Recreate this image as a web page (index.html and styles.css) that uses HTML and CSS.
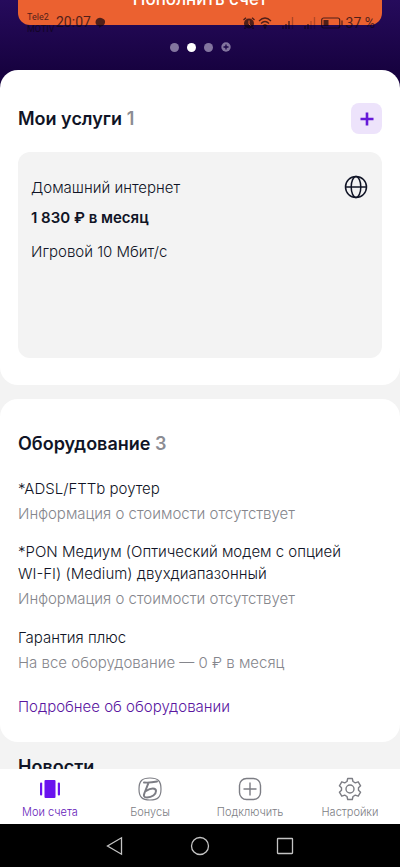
FILE: index.html
```
<!DOCTYPE html>
<html lang="ru">
<head>
<meta charset="utf-8">
<meta name="viewport" content="width=device-width, initial-scale=1">
<title>Мои счета</title>
<link rel="stylesheet" href="styles.css">
</head>
<body>
<div class="status">
  <div class="carrier"><span>Tele2</span><span>MOTIV</span></div>
  <span class="time">20:07</span>
  <svg class="bubble" width="12" height="12" viewBox="0 0 12 12"><path d="M3.500 1.500Q6 0 8.500 1.500Q11.500 2.500 11 5.500Q10.500 8.500 7 9.500L5.500 11L5 9Q1.500 8.500 1.500 5Q1.500 2.500 3.500 1.500Z" fill="currentColor"/></svg>
  <div class="signals">
    <svg width="12" height="12" viewBox="0 0 12 12"><circle cx="6" cy="6.500" r="5" fill="currentColor"/><path d="M.5 3L3 .8M11.500 3L9 .8M2.500 10.500L1.500 12M9.500 10.500L10.500 12" stroke="currentColor" stroke-width="1.500"/><path d="M6 3.500V7L7.500 8.500" fill="none" stroke="#eb6130"/></svg>
    <svg width="14" height="12" viewBox="0 0 14 12" fill="none" stroke="currentColor" stroke-width="1.200"><path d="M1 4Q7-2 13 4M3 6.500Q7 2.500 11 6.500M5 9Q7 7 9 9"/><circle cx="7" cy="10.500" r=".6" fill="currentColor"/></svg>
    <svg class="cell" width="12" height="12" viewBox="0 0 12 12" stroke="currentColor" stroke-width="1.300"><path d="M1 9V12M4 7V12M7 4V12"/><path d="M10.500 0V12" opacity=".4"/></svg>
    <svg class="cell" width="12" height="12" viewBox="0 0 12 12" stroke="currentColor" stroke-width="1.300"><path d="M1 9V12M4 7V12"/><path d="M7 4V12M10.500 0V12" opacity=".35"/></svg>
    <svg class="battery" width="22" height="12" viewBox="0 0 22 12"><rect x=".7" y="1" width="18" height="10" rx="2" fill="none" stroke="currentColor" stroke-width="1.200"/><rect x="2.500" y="3" width="5" height="6" fill="currentColor"/><path d="M21 3.500V8.500" stroke="currentColor" stroke-width="1.200"/></svg>
    <span class="charge">37 %</span>
  </div>
</div>
<main>
  <header class="hero">
    <div class="pay-clip"><button class="pay">Пополнить счет</button></div>
    <div class="dots">
      <i></i><i class="on"></i><i></i>
      <svg width="10" height="10" viewBox="0 0 10 10"><circle cx="5" cy="5" r="4.700" fill="#83759f"/><path d="M5 2.500V7.500M2.500 5H7.500" stroke="#1c0648" stroke-width="1.300"/></svg>
    </div>
  </header>
  <section class="card services">
    <div class="head">
      <h2>Мои услуги <span>1</span></h2>
      <button class="add" aria-label="Добавить услугу"><svg width="14" height="14" viewBox="0 0 14 14"><path d="M7 .5V13.500M.5 7H13.500" stroke="#6519d8" stroke-width="2.600"/></svg></button>
    </div>
    <article class="service">
      <div class="row">
        <p>Домашний интернет</p>
        <svg width="24" height="24" viewBox="0 0 24 24" fill="none" stroke="#101426" stroke-width="1.500"><circle cx="12" cy="12" r="10.500"/><ellipse cx="12" cy="12" rx="4.800" ry="10.500"/><path d="M1.500 12H22.500"/></svg>
      </div>
      <p class="price">1 830 ₽ в месяц</p>
      <p class="plan">Игровой 10 Мбит/с</p>
    </article>
  </section>
  <section class="card equipment">
    <h2>Оборудование <span>3</span></h2>
    <dl>
      <div><dt>*ADSL/FTTb роутер</dt><dd>Информация о стоимости отсутствует</dd></div>
      <div><dt>*PON Медиум (Оптический модем с опцией <span class="keep">WI-FI)</span> (Medium) двухдиапазонный</dt><dd>Информация о стоимости отсутствует</dd></div>
      <div><dt>Гарантия плюс</dt><dd>На все оборудование — 0 ₽ в месяц</dd></div>
    </dl>
    <a class="more" href="#equipment">Подробнее об оборудовании</a>
  </section>
  <section class="news"><h2>Новости</h2></section>
</main>
<footer>
  <nav class="tabs">
    <a class="active" href="#accounts">
      <svg width="24" height="24" viewBox="0 0 24 24" fill="#6a13ee"><rect x="6.500" y="3" width="11" height="18" rx="1"/><rect x="2" y="5.500" width="2.200" height="13" rx="1"/><rect x="19.800" y="5.500" width="2.200" height="13" rx="1"/></svg>
      <span>Мои счета</span></a>
    <a href="#bonus">
      <svg width="24" height="24" viewBox="0 0 24 24" fill="none" stroke="currentColor"><path d="M12 1C20 1 23 4 23 12S20 23 12 23S1 20 1 12S4 1 12 1Z" stroke-width="1.200"/><path d="M19 4.500Q12 6 6 5.500M10.500 5.800L6.500 16M6.500 16Q4.500 20.500 9 20.500C14 20.500 18 17.500 18 14C18 10.500 13 10.500 8 14" stroke-width="2" stroke-linecap="round"/></svg>
      <span>Бонусы</span></a>
    <a href="#connect">
      <svg width="24" height="24" viewBox="0 0 24 24" fill="none" stroke="currentColor" stroke-width="1.400"><rect x="1.500" y="1.500" width="21" height="21" rx="7"/><path d="M12 5.500V18.500M5.500 12H18.500"/></svg>
      <span>Подключить</span></a>
    <a href="#settings">
      <svg width="24" height="24" viewBox="0 0 24 24" fill="none" stroke="currentColor" stroke-width="1.400" stroke-linejoin="round"><path d="M9.700 1.500H14.300L15 4.500L17.300 5.800L20.200 4.800L22.600 8.800L20.500 10.800V13.200L22.600 15.200L20.200 19.200L17.300 18.200L15 19.500L14.300 22.500H9.700L9 19.500L6.700 18.200L3.800 19.200L1.400 15.200L3.500 13.200V10.800L1.400 8.800L3.800 4.800L6.700 5.800L9 4.500Z"/><circle cx="12" cy="12" r="4"/></svg>
      <span>Настройки</span></a>
  </nav>
  <div class="system">
    <button aria-label="Назад"><svg width="20" height="20" viewBox="0 0 20 20"><path d="M16.500 1.800V18.200L2.500 10Z"/></svg></button>
    <button aria-label="Домой"><svg width="20" height="20" viewBox="0 0 20 20"><circle cx="10" cy="10" r="8.500"/></svg></button>
    <button aria-label="Недавние"><svg width="20" height="20" viewBox="0 0 20 20"><rect x="2.500" y="2.500" width="15" height="15" rx=".5"/></svg></button>
  </div>
</footer>
</body>
</html>
```
FILE: styles.css
```
* { box-sizing: border-box; }
body {
  margin: 0;
  height: 100vh;
  display: flex;
  flex-direction: column;
  background: #f3f3f3;
  color: #101426;
  font: 300 15px/22px Inter, "Noto Sans", sans-serif;
}
h2, p, dl, dd { margin: 0; }
button { border: 0; padding: 0; font: inherit; }
a { text-decoration: none; }
svg { display: block; flex: none; }
main { flex: 1; min-height: 0; overflow: hidden; }

.status {
  position: absolute;
  top: 11px;
  left: 27px;
  right: 25px;
  display: flex;
  align-items: flex-start;
  color: #0c0410;
  opacity: .7;
  font-family: Roboto, sans-serif;
  font-weight: 400;
  z-index: 1;
}
.carrier { width: 29px; display: flex; flex-direction: column; font-size: 9px; line-height: 12px; }
.time { font-size: 14px; line-height: 23px; }
.bubble { margin: 6px 0 0 3px; }
.signals { margin-left: auto; display: flex; align-items: center; gap: 3px; height: 23px; }
.cell { margin-left: 7px; }
.battery { margin-left: 2px; }
.charge { font-size: 14px; }

.hero {
  height: 96px;
  background: linear-gradient(#260b5c, #170240 70px);
}
.pay-clip {
  height: 25px;
  margin: 0 18px;
  overflow: hidden;
  display: flex;
  align-items: flex-end;
}
.pay {
  flex: 1;
  height: 52px;
  border-radius: 12px;
  background: #eb6130;
  color: #fff;
  font-size: 17px;
  font-weight: 500;
}
.dots { display: flex; justify-content: center; align-items: center; gap: 8px; padding-top: 17px; }
.dots i { width: 9px; height: 9px; border-radius: 50%; background: #83759f; }
.dots .on { background: #fff; }

.card { background: #fff; border-radius: 18px; padding: 0 18px; }
h2 { font-size: 18px; line-height: 26px; font-weight: 600; }
h2 span { color: #8b8c93; }
.services { margin-top: -26px; padding-top: 33px; padding-bottom: 27px; }
.head { display: flex; justify-content: space-between; align-items: center; margin-bottom: 18px; }
.add {
  width: 31px;
  height: 31px;
  border-radius: 8px;
  background: #ede3fb;
  display: grid;
  place-items: center;
}
.service { min-height: 206px; border-radius: 12px; background: #f3f3f3; padding: 23px 14px 24px 13px; }
.row { display: flex; justify-content: space-between; align-items: flex-end; }
.price { margin-top: 8px; font-weight: 600; }
.plan { margin-top: 12px; }

.equipment { margin-top: 14px; padding-top: 32px; padding-bottom: 24px; }
dl { margin: 21px 0 22px; display: grid; gap: 16px; }
dd { margin-top: 3px; color: #85868c; }
.keep { white-space: nowrap; }
dl div:last-child { padding-top: 1px; }
.more { color: #5a169f; display: block; }
.news { padding: 12px 18px; }

.tabs { display: grid; grid-template-columns: repeat(4, 1fr); background: #fff; height: 55px; padding-top: 8px; }
.tabs a {
  display: flex;
  flex-direction: column;
  align-items: center;
  gap: 4px;
  color: #7c7d84;
  font-size: 11px;
  line-height: 15px;
}
.tabs .active { color: #6420b8; }
.system { height: 43px; background: #000; display: flex; justify-content: center; align-items: center; gap: 65px; }
.system button { background: none; }
.system svg { fill: none; stroke: #c4c4c4; stroke-width: 1.3; }
```
